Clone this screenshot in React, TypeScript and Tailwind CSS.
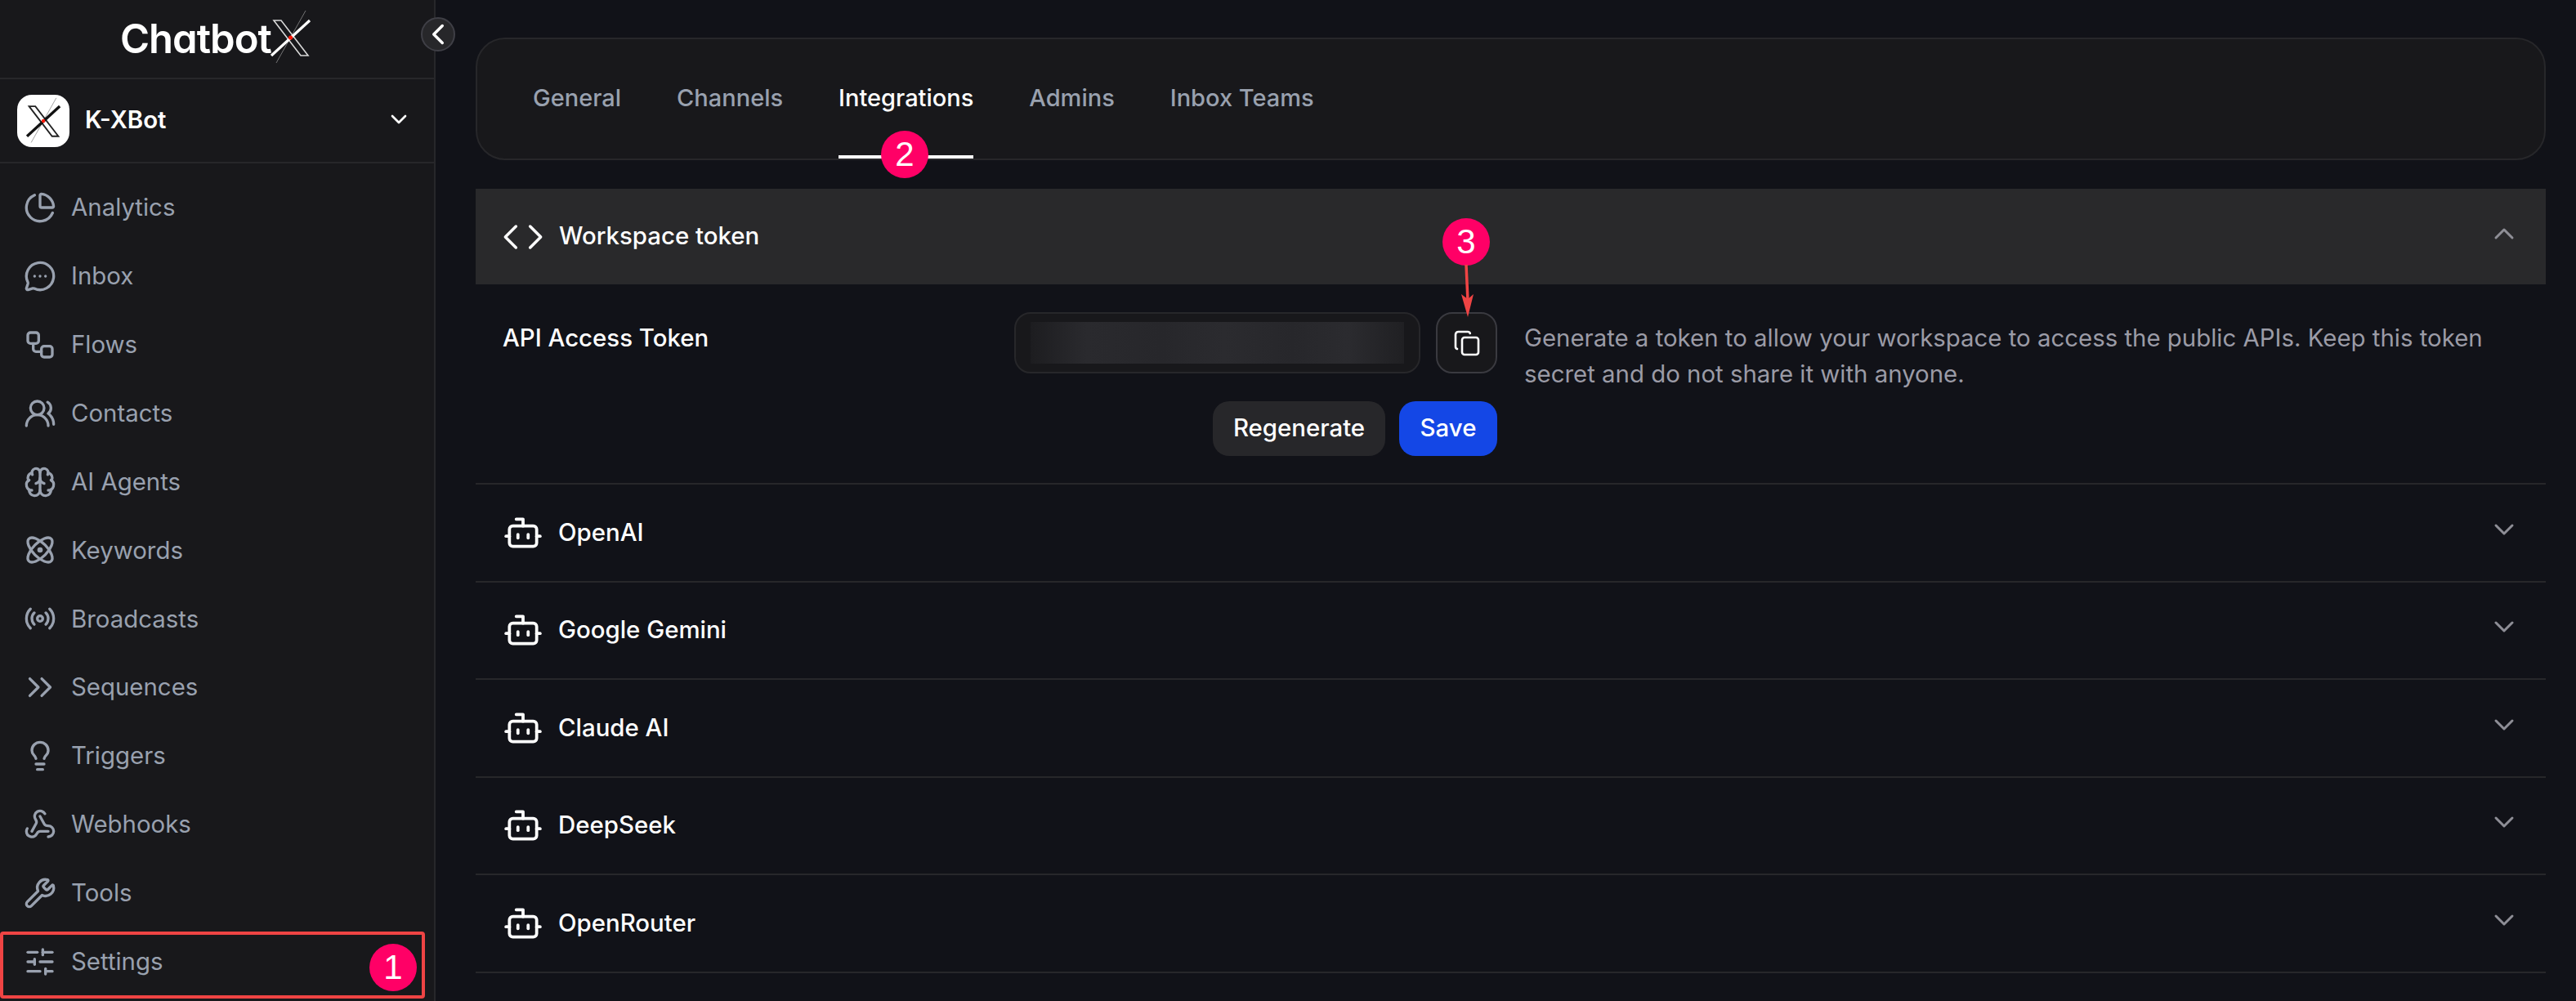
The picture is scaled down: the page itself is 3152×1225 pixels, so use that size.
import {
  Atom,
  Bot,
  Brain,
  ChartPie,
  ChevronDown,
  ChevronLeft,
  ChevronUp,
  ChevronsRight,
  Code,
  Lightbulb,
  MessageCircleMore,
  Radio,
  SlidersHorizontal,
  UsersRound,
  Webhook,
  Workflow,
  Wrench,
} from "lucide-react";

const NAV = [
  { label: "Analytics", icon: ChartPie },
  { label: "Inbox", icon: MessageCircleMore },
  { label: "Flows", icon: Workflow },
  { label: "Contacts", icon: UsersRound },
  { label: "AI Agents", icon: Brain },
  { label: "Keywords", icon: Atom },
  { label: "Broadcasts", icon: Radio },
  { label: "Sequences", icon: ChevronsRight },
  { label: "Triggers", icon: Lightbulb },
  { label: "Webhooks", icon: Webhook },
  { label: "Tools", icon: Wrench },
  { label: "Settings", icon: SlidersHorizontal },
];

const TABS = ["General", "Channels", "Integrations", "Admins", "Inbox Teams"];
const PROVIDERS = ["OpenAI", "Google Gemini", "Claude AI", "DeepSeek", "OpenRouter"];

function LogoMark({ dark }: { dark?: boolean }) {
  const ink = dark ? "#111111" : "#ffffff";
  return (
    <svg viewBox="0 0 50 68" className="h-full w-full" fill="none">
      <path d="M43 1 7 65" stroke={dark ? "#777777" : "#8a8a8a"} strokeWidth="0.8" />
      <path d="M4 13h9l33 43h-9z" stroke={dark ? "#222222" : "#d8d8d8"} strokeWidth={dark ? 2.2 : 1.6} />
      <path d="M48 13 1 56" stroke={ink} strokeWidth={dark ? 4 : 3.2} />
      <circle cx="24.5" cy="34" r="2.6" fill="#ff1a0a" />
    </svg>
  );
}

function Badge({ n, className }: { n: number; className: string }) {
  return (
    <div
      className={`absolute flex h-[58px] w-[58px] items-center justify-center rounded-full bg-[#ff0066] font-['Liberation_Sans',sans-serif] text-[42px] leading-none text-white ${className}`}
    >
      {n}
    </div>
  );
}

function Sidebar() {
  return (
    <aside className="relative flex w-[533px] shrink-0 flex-col border-r-2 border-[#27272a] bg-[#18181b]">
      <div className="flex h-[97px] shrink-0 items-center border-b-2 border-[#27272a] pl-[147px]">
        <span className="font-semibold text-[49px] leading-none tracking-[-1px] text-white [font-feature-settings:'cv11']">
          Chatbot
        </span>
        <span className="-ml-[1px] mb-[4px] h-[68px] w-[50px] shrink-0">
          <LogoMark />
        </span>
      </div>
      <button className="absolute left-[515px] top-[21px] flex h-[42px] w-[42px] items-center justify-center rounded-full border-2 border-[#3f3f46] bg-[#27272a] text-white">
        <ChevronLeft size={42} strokeWidth={2} className="shrink-0" />
      </button>

      <div className="flex h-[103px] shrink-0 items-center border-b-2 border-[#27272a] pl-[21px] pr-[27px]">
        <div className="flex h-[64px] w-[64px] items-center justify-center rounded-[18px] bg-white">
          <span className="h-[58px] w-[43px]">
            <LogoMark dark />
          </span>
        </div>
        <span className="ml-[19px] flex-1 text-[29.4px] font-semibold text-white">K-XBot</span>
        <ChevronDown size={32} strokeWidth={2} className="mb-[4px] text-white" />
      </div>

      <nav className="flex flex-col pt-[12px]">
        {NAV.map(({ label, icon: Icon }) => (
          <div key={label} className="flex h-[83.9px] items-center gap-[18px] pl-[29px] text-gray-400">
            <Icon size={40} strokeWidth={label === "Sequences" ? 1.6 : 2} className={label === "Sequences" ? "scale-125" : ""} />
            <span className="text-[29.4px] leading-none">{label}</span>
          </div>
        ))}
      </nav>
    </aside>
  );
}

function ProviderRow({ name }: { name: string }) {
  return (
    <div className="flex h-[119.5px] items-center border-b-2 border-[#27272a] pl-[33px] pr-[31px]">
      <Bot size={50} strokeWidth={1.8} className="text-white" />
      <span className="ml-[18px] flex-1 text-[29.4px] font-medium text-white">{name}</span>
      <ChevronDown size={40} strokeWidth={1.8} className="mb-[8px] text-[#8e8e96]" />
    </div>
  );
}

export default function App() {
  return (
    <div className="relative flex h-screen overflow-hidden bg-[#111218] font-['Inter',sans-serif]">
      <Sidebar />

      <main className="flex-1 pl-[49px] pr-[37px] pt-[46px]">
        <div className="flex h-[150px] gap-[68px] rounded-[36px] border-2 border-[#27272a] bg-[#18181b] pl-[68px]">
          {TABS.map((tab) => (
            <div
              key={tab}
              className={`flex h-full items-center border-b-4 pt-[2px] text-[29px] font-medium ${
                tab === "Integrations" ? "border-white text-white" : "border-transparent text-gray-400"
              }`}
            >
              {tab}
            </div>
          ))}
        </div>

        <div className="mt-[35px] flex h-[117px] items-center bg-[#29292b] pl-[32px] pr-[31px]">
          <Code size={52} strokeWidth={1.6} className="text-white" />
          <span className="ml-[18px] flex-1 text-[29.4px] font-medium text-white">Workspace token</span>
          <ChevronUp size={40} strokeWidth={1.8} className="mb-[8px] text-[#8e8e96]" />
        </div>

        <div className="flex h-[245px] border-b-2 border-[#27272a] pl-[33px] pr-[70px] pt-[34px]">
          <div className="w-[626px] shrink-0 pt-[12px] text-[29.4px] font-medium leading-[40px] text-white">
            API Access Token
          </div>
          <div className="flex w-[591px] shrink-0 flex-col">
            <div className="flex gap-[19px]">
              <div className="flex h-[75px] w-[497px] items-center rounded-[20px] border-2 border-[#27272a] bg-[#18181b] px-[18px]">
                <div className="h-[51px] w-full bg-[linear-gradient(90deg,#1d1d20,#2a2a2e_15%,#27272b_35%,#2b2b2f_52%,#27272b_70%,#2b2b2f_85%,#202023)]" />
              </div>
              <button className="flex h-[75px] w-[75px] items-center justify-center rounded-[20px] border-2 border-[#3a3a40] bg-[#18181b] text-white">
                <svg width="32" height="32" viewBox="0 0 32 32" fill="none" stroke="currentColor" strokeWidth="2.6" strokeLinecap="round" strokeLinejoin="round">
                  <rect x="10" y="9" width="20" height="21" rx="3" />
                  <path d="M4 23c-1.2-.4-2-1.5-2-2.8V5.5C2 3.6 3.6 2 5.5 2H17c1.3 0 2.4.8 2.8 2" />
                </svg>
              </button>
            </div>
            <div className="mt-[34px] flex justify-end gap-[17px]">
              <button className="h-[67px] w-[211px] rounded-[20px] bg-[#27272a] text-[29.4px] font-medium text-white">
                Regenerate
              </button>
              <button className="h-[67px] w-[120px] rounded-[20px] bg-[#1447e6] text-[29.4px] font-medium text-white">
                Save
              </button>
            </div>
          </div>
          <p className="ml-[33px] flex-1 pt-[10px] text-[29.4px] leading-[44px] text-[#9b9ba6]">
            Generate a token to allow your workspace to access the public APIs. Keep this token secret and do not share it with anyone.
          </p>
        </div>

        {PROVIDERS.map((name) => (
          <ProviderRow key={name} name={name} />
        ))}
      </main>

      {/* screenshot annotations */}
      <div className="absolute left-0 top-[1140px] h-[82px] w-[520px] rounded-[4px] border-[4px] border-[#ef4444]" />
      <Badge n={1} className="left-[452px] top-[1155px]" />
      <Badge n={2} className="left-[1078px] top-[160px]" />
      <Badge n={3} className="left-[1765px] top-[267px]" />
      <svg className="absolute left-[1780px] top-[322px]" width="32" height="68" viewBox="0 0 32 68" fill="none">
        <path d="M14 2 16 46" stroke="#ef4444" strokeWidth="3.5" />
        <path d="M8 38 16 66 23 38 16 44z" fill="#ef4444" />
      </svg>
    </div>
  );
}
